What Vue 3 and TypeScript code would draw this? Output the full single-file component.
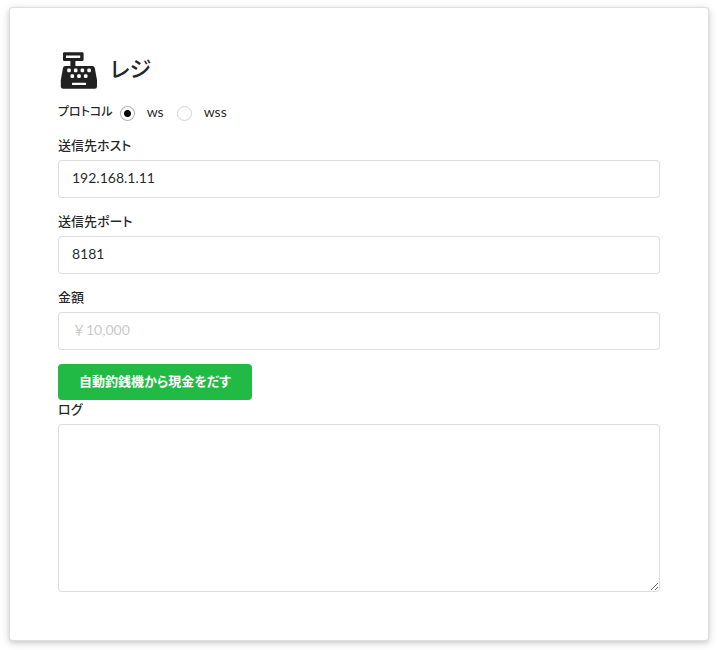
<script setup lang="ts">
import { ref } from 'vue'

const protocol = ref<'ws' | 'wss'>('ws')
const host = ref('192.168.1.11')
const port = ref('8181')
const amount = ref('')
const log = ref('')
const sending = ref(false)

function dispense(): void {
  if (sending.value || !amount.value) return
  sending.value = true
  const socket = new WebSocket(`${protocol.value}://${host.value}:${port.value}`)
  socket.onopen = () => socket.send(amount.value)
  socket.onmessage = (event: MessageEvent<string>) => {
    log.value += `${event.data}\n`
  }
  socket.onclose = () => {
    sending.value = false
  }
}
</script>

<template>
  <main class="segment">
    <h1 class="header">
      <svg class="register" viewBox="0 0 42 42" aria-hidden="true">
        <path
          fill="currentColor"
          fill-rule="evenodd"
          d="M6.200 4.200h18.200a1.200 1.200 0 0 1 1.200 1.200v6.400a1.200 1.200 0 0 1-1.200 1.200h-7v5h17a2.400 2.400 0 0 1 2.400 2L39 32v6.500a2.300 2.300 0 0 1-2.300 2.300H5.100a2.300 2.300 0 0 1-2.300-2.300V32L5 20a2.400 2.400 0 0 1 2.400-2h5v-5H6.200A1.200 1.200 0 0 1 5 11.800V5.400a1.200 1.200 0 0 1 1.200-1.200zM8 7.600v2.300h14.200V7.600zM14.500 34.800a.5.5 0 0 0-.5.5v1.200a.5.5 0 0 0 .5.5h13.100a.5.5 0 0 0 .5-.5v-1.200a.5.5 0 0 0-.5-.5z"
        />
        <g fill="#fff">
          <rect x="9.200" y="20.600" width="3.600" height="3.600" rx="1.200" />
          <rect x="15.900" y="20.600" width="3.600" height="3.600" rx="1.200" />
          <rect x="22.600" y="20.600" width="3.600" height="3.600" rx="1.200" />
          <rect x="29.300" y="20.600" width="3.600" height="3.600" rx="1.200" />
          <rect x="12.500" y="26.300" width="3.600" height="3.600" rx="1.200" />
          <rect x="19.200" y="26.300" width="3.600" height="3.600" rx="1.200" />
          <rect x="25.900" y="26.300" width="3.600" height="3.600" rx="1.200" />
        </g>
      </svg>
      <span>レジ</span>
    </h1>
    <form class="form" @submit.prevent="dispense">
      <div class="protocols" role="radiogroup" aria-labelledby="protocol">
        <span id="protocol" class="label legend">プロトコル</span>
        <label class="radio">
          <input v-model="protocol" type="radio" name="protocol" value="ws" />
          <span>ws</span>
        </label>
        <label class="radio">
          <input v-model="protocol" type="radio" name="protocol" value="wss" />
          <span>wss</span>
        </label>
      </div>
      <div class="field">
        <label class="label" for="host">送信先ホスト</label>
        <input id="host" v-model="host" class="input" type="text" />
      </div>
      <div class="field">
        <label class="label" for="port">送信先ポート</label>
        <input id="port" v-model="port" class="input" type="text" />
      </div>
      <div class="field">
        <label class="label" for="amount">金額</label>
        <input id="amount" v-model="amount" class="input" type="text" placeholder="￥10,000" />
      </div>
      <button class="button" type="submit">自動釣銭機から現金をだす</button>
      <div class="field">
        <label class="label" for="log">ログ</label>
        <textarea id="log" v-model="log" class="input area"></textarea>
      </div>
    </form>
  </main>
</template>

<style>
body {
  background: #fff;
}
</style>

<style scoped>
.segment {
  box-sizing: border-box;
  margin: 7px 8px 9px 9px;
  padding: 40px 48px 48px;
  border: 1px solid rgba(34, 36, 38, 0.15);
  border-radius: 4px;
  background: #fff;
  box-shadow:
    0 2px 4px 0 rgba(34, 36, 38, 0.12),
    0 2px 10px 0 rgba(34, 36, 38, 0.15);
  color: rgba(0, 0, 0, 0.87);
  font-family: Lato, 'Noto Sans CJK JP', sans-serif;
  font-size: 14px;
  line-height: 20px;
  font-feature-settings: 'palt';
}

.header {
  display: flex;
  align-items: center;
  gap: 10px;
  margin: 0 0 12px;
  font-size: 22px;
  font-weight: 500;
  line-height: 40px;
}

.register {
  width: 42px;
  height: 42px;
}

.protocols {
  display: flex;
  align-items: center;
  gap: 13px;
  height: 20px;
  margin-bottom: 14px;
}

.label {
  display: block;
  font-size: 13px;
  font-weight: 500;
  line-height: 18px;
}

.legend {
  margin-right: -6px;
  font-size: 12px;
}

.radio {
  display: flex;
  align-items: center;
  gap: 12px;
}

.radio input {
  appearance: none;
  box-sizing: border-box;
  width: 15px;
  height: 15px;
  margin: 2px 0 0;
  border: 1px solid #d4d4d5;
  border-radius: 50%;
  background: #fff;
}

.radio input:checked {
  border-color: rgba(34, 36, 38, 0.35);
  background: radial-gradient(circle, #000 3px, #fff 4px);
}

.field {
  margin-bottom: 14px;
}

.field:last-child {
  margin-bottom: 0;
}

.input {
  display: block;
  box-sizing: border-box;
  width: 100%;
  height: 38px;
  margin-top: 6px;
  padding: 8px 13px 12px;
  border: 1px solid rgba(34, 36, 38, 0.15);
  border-radius: 4px;
  outline: 0;
  background: #fff;
  color: rgba(0, 0, 0, 0.87);
  font: inherit;
  font-feature-settings: normal;
  line-height: 16px;
}

.input::placeholder {
  color: rgba(191, 191, 191, 0.87);
}

.input:focus {
  border-color: #85b7d9;
}

.area {
  height: 168px;
  resize: vertical;
}

.button {
  display: block;
  height: 36px;
  padding: 0 21px 2px;
  border: 0;
  border-radius: 4px;
  background: #21ba45;
  color: #fff;
  font: inherit;
  font-feature-settings: inherit;
  font-size: 13px;
  font-weight: 700;
  line-height: 20px;
  cursor: pointer;
}
</style>
